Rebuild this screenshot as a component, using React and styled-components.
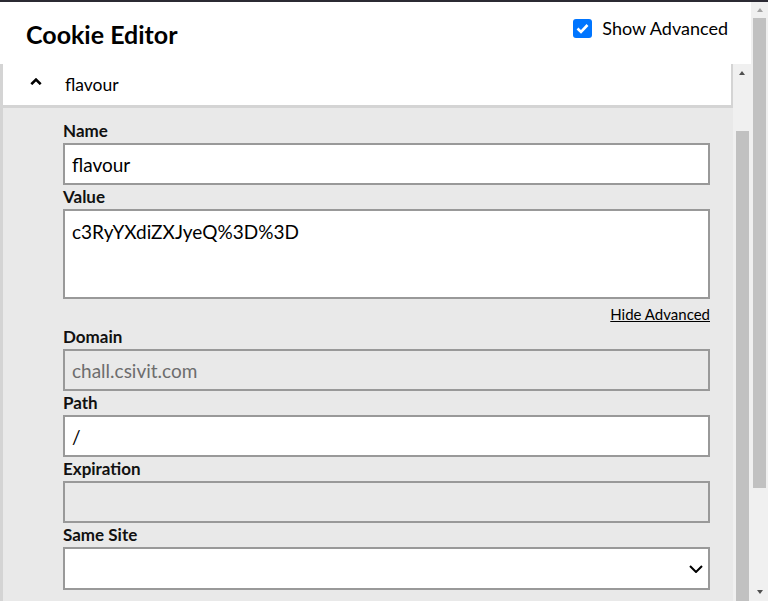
import React from 'react';
import styled, { createGlobalStyle } from 'styled-components';

const GlobalStyle = createGlobalStyle`
  html, body {
    margin: 0;
    padding: 0;
    background: #fff;
  }
  body {
    font-family: Lato, "Liberation Sans", sans-serif;
    overflow: hidden;
  }
  * {
    box-sizing: border-box;
  }
`;

const Window = styled.div`
  display: flex;
  width: 768px;
  height: 601px;
  border-top: 2px solid #2b2a33;
  overflow: hidden;
`;

const Main = styled.div`
  flex: 1;
  display: flex;
  flex-direction: column;
  min-width: 0;
`;

const Header = styled.header`
  height: 62px;
  flex-shrink: 0;
  display: flex;
  justify-content: space-between;
  align-items: flex-start;
  padding: 0 23px 0 26px;
`;

const Title = styled.h1`
  margin: 16px 0 0;
  font-size: 25px;
  line-height: 32px;
  font-weight: 700;
  color: #000;
`;

const ShowAdvanced = styled.label`
  margin-top: 14px;
  display: flex;
  align-items: center;
  gap: 10px;
  font-size: 18px;
  line-height: 24px;
  color: #000;
`;

const CheckBox = styled.span`
  width: 19px;
  height: 19px;
  border-radius: 3px;
  background: #0075ff;
  display: flex;
  align-items: center;
  justify-content: center;
`;

const ListArea = styled.div`
  flex: 1;
  display: flex;
  min-height: 0;
`;

const CookieList = styled.div`
  flex: 1;
  min-width: 0;
`;

const CookieItem = styled.div`
  border-left: 3px solid #d4d4d4;
`;

const CookieRow = styled.div`
  height: 44px;
  display: flex;
  align-items: center;
  gap: 23px;
  padding-left: 27px;
  background: #fff;
  border-right: 2px solid #d4d4d4;
  border-bottom: 3px solid #d4d4d4;
`;

const Caret = styled.svg`
  display: block;
  margin-bottom: 6px;
`;

const CookieName = styled.span`
  font-size: 17.5px;
  line-height: 40px;
  color: #000;
`;

const Panel = styled.div`
  background: #e9e9e9;
  padding: 11px 23px 24px 60px;
`;

const FieldLabel = styled.label`
  display: block;
  font-size: 17px;
  line-height: 24px;
  font-weight: 700;
  color: #111;
`;

const TextInput = styled.input`
  display: block;
  width: 100%;
  height: 42px;
  margin: 0;
  padding: 0 7px;
  border: 2px solid #999;
  border-radius: 0;
  outline: none;
  font-family: inherit;
  font-size: 19px;
  color: ${({ $muted }) => ($muted ? '#6d6d6d' : '#000')};
  background: ${({ $muted }) => ($muted ? '#e9e9e9' : '#fff')};
`;

const TextArea = styled.textarea`
  display: block;
  width: 100%;
  height: 90px;
  margin: 0;
  padding: 9px 7px;
  border: 2px solid #999;
  border-radius: 0;
  outline: none;
  resize: none;
  font-family: inherit;
  font-size: 19px;
  line-height: 24px;
  color: #000;
  background: #fff;
`;

const HideRow = styled.div`
  height: 26px;
  padding-top: 5px;
  display: flex;
  justify-content: flex-end;
`;

const HideLink = styled.a`
  font-size: 15px;
  line-height: 20px;
  color: #000;
  text-decoration: underline;
  cursor: pointer;
`;

const SelectWrap = styled.div`
  position: relative;
`;

const Select = styled.select`
  display: block;
  width: 100%;
  height: 43px;
  margin: 0;
  padding: 0 7px;
  border: 2px solid #999;
  border-radius: 0;
  appearance: none;
  outline: none;
  font-family: inherit;
  font-size: 19px;
  background: #fff;
`;

const SelectChevron = styled.svg`
  position: absolute;
  right: 7px;
  top: 50%;
  transform: translateY(-50%);
  pointer-events: none;
`;

const Scrollbar = styled.div`
  width: ${({ $width }) => $width}px;
  flex-shrink: 0;
  display: flex;
  flex-direction: column;
  background: #f0f0f0;
`;

const ArrowButton = styled.div`
  height: ${({ $height }) => $height}px;
  flex-shrink: 0;
  display: flex;
  align-items: center;
  justify-content: center;
`;

const Arrow = styled.span`
  width: 0;
  height: 0;
  border-left: 3.5px solid transparent;
  border-right: 3.5px solid transparent;
  ${({ $down, $color }) =>
    $down
      ? `border-top: 4px solid ${$color};`
      : `border-bottom: 4px solid ${$color};`}
`;

const Thumb = styled.div`
  background: #c1c1c1;
  margin: ${({ $margin }) => $margin};
  ${({ $height }) => ($height ? `height: ${$height}px; flex-shrink: 0;` : 'flex: 1;')}
`;

const Spacer = styled.div`
  flex: 1;
`;

const Field = ({ label, children }) => (
  <>
    <FieldLabel>{label}</FieldLabel>
    {children}
  </>
);

const App = () => {
  return (
    <>
      <GlobalStyle />
      <Window>
        <Main>
          <Header>
            <Title>Cookie Editor</Title>
            <ShowAdvanced>
              <CheckBox>
                <svg width="13" height="11" viewBox="0 0 13 11">
                  <polyline
                    points="1.5,5.5 5,9 11.5,2"
                    fill="none"
                    stroke="#fff"
                    strokeWidth="2.6"
                  />
                </svg>
              </CheckBox>
              Show Advanced
            </ShowAdvanced>
          </Header>

          <ListArea>
            <CookieList>
              <CookieItem>
                <CookieRow>
                  <Caret width="12" height="7" viewBox="0 0 12 7">
                    <polyline
                      points="1.3,6.2 6,1.6 10.7,6.2"
                      fill="none"
                      stroke="#000"
                      strokeWidth="2.6"
                    />
                  </Caret>
                  <CookieName>flavour</CookieName>
                </CookieRow>

                <Panel>
                  <Field label="Name">
                    <TextInput defaultValue="flavour" />
                  </Field>
                  <Field label="Value">
                    <TextArea defaultValue="c3RyYXdiZXJyeQ%3D%3D" />
                  </Field>
                  <HideRow>
                    <HideLink>Hide Advanced</HideLink>
                  </HideRow>
                  <Field label="Domain">
                    <TextInput $muted readOnly defaultValue="chall.csivit.com" />
                  </Field>
                  <Field label="Path">
                    <TextInput defaultValue="/" />
                  </Field>
                  <Field label="Expiration">
                    <TextInput $muted readOnly defaultValue="" />
                  </Field>
                  <Field label="Same Site">
                    <SelectWrap>
                      <Select defaultValue="">
                        <option value=""></option>
                        <option value="lax">Lax</option>
                        <option value="strict">Strict</option>
                        <option value="none">None</option>
                      </Select>
                      <SelectChevron width="14" height="8" viewBox="0 0 14 8">
                        <polyline
                          points="1,1 7,7 13,1"
                          fill="none"
                          stroke="#000"
                          strokeWidth="2"
                        />
                      </SelectChevron>
                    </SelectWrap>
                  </Field>
                </Panel>
              </CookieItem>
            </CookieList>

            <Scrollbar $width={18}>
              <ArrowButton $height={17}>
                <Arrow $color="#505050" />
              </ArrowButton>
              <Thumb $margin="50px 2px 0 3px" />
            </Scrollbar>
          </ListArea>
        </Main>

        <Scrollbar $width={17}>
          <ArrowButton $height={16}>
            <Arrow $color="#a3a3a3" />
          </ArrowButton>
          <Thumb $margin="0 2px" $height={470} />
          <Spacer />
          <ArrowButton $height={18}>
            <Arrow $down $color="#505050" />
          </ArrowButton>
        </Scrollbar>
      </Window>
    </>
  );
};

export default App;
